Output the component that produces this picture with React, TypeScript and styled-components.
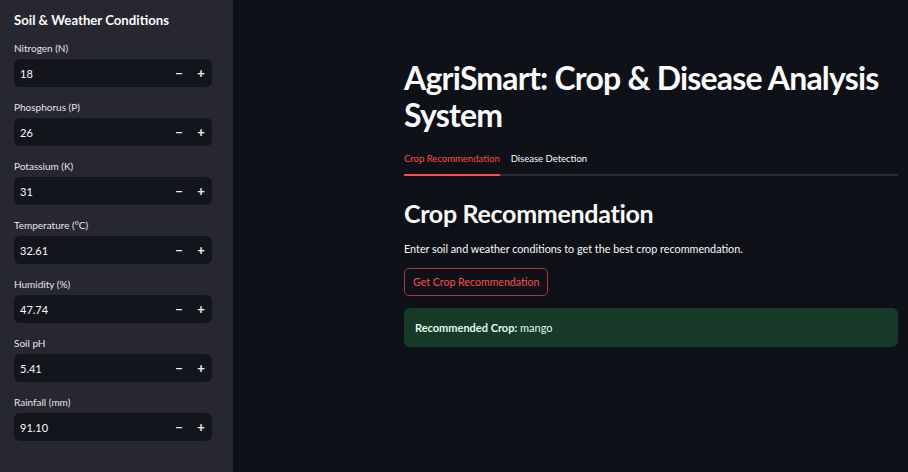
import React from "react";
import styled, { createGlobalStyle } from "styled-components";

const GlobalStyle = createGlobalStyle`
  html, body {
    margin: 0;
    padding: 0;
    background: #0e1117;
  }
  body {
    font-family: Lato, "Noto Sans", sans-serif;
    color: #fafafa;
  }
`;

const Page = styled.div`
  display: flex;
  width: 908px;
  height: 472px;
  overflow: hidden;
  background: #0e1117;
`;

const Sidebar = styled.aside`
  width: 233px;
  flex-shrink: 0;
  background: #262730;
  padding: 11px 21px 0 14px;
  box-sizing: border-box;
  display: flex;
  flex-direction: column;
`;

const SideTitle = styled.h2`
  margin: 0 0 12px;
  font-size: 13.2px;
  line-height: 18px;
  font-weight: 700;
  color: #fafafa;
`;

const Field = styled.div`
  display: flex;
  flex-direction: column;
  margin-bottom: 13px;
`;

const Label = styled.label`
  font-size: 10px;
  line-height: 14px;
  color: #e6e6ea;
  margin-bottom: 4px;
`;

const NumberBox = styled.div`
  height: 28px;
  background: #13151c;
  border-radius: 6px;
  display: flex;
  align-items: center;
  padding: 0 0 0 6px;
  font-size: 11px;
  color: #fafafa;
`;

const Value = styled.span`
  flex: 1;
`;

const Step = styled.button`
  width: 22px;
  height: 28px;
  background: transparent;
  border: none;
  color: #fafafa;
  font-family: inherit;
  font-size: 13px;
  font-weight: 700;
  padding: 0;
  display: flex;
  align-items: center;
  justify-content: center;
`;

const Main = styled.main`
  flex: 1;
  padding: 59px 10px 0 171px;
  display: flex;
  flex-direction: column;
`;

const Title = styled.h1`
  margin: 0;
  font-size: 32px;
  line-height: 37px;
  font-weight: 700;
  letter-spacing: -0.8px;
  color: #fafafa;
`;

const TabList = styled.div`
  margin-top: 17px;
  display: flex;
  gap: 11px;
  border-bottom: 2px solid #2b2d36;
`;

const Tab = styled.div<{ active?: boolean }>`
  font-size: 9.5px;
  line-height: 14px;
  padding: 2px 0 8px;
  color: ${({ active }) => (active ? "#ff4b4b" : "#fafafa")};
  border-bottom: 2px solid ${({ active }) => (active ? "#ff4b4b" : "transparent")};
  margin-bottom: -2px;
`;

const Heading = styled.h2`
  margin: 22px 0 0;
  font-size: 25px;
  line-height: 30px;
  font-weight: 700;
  letter-spacing: -0.3px;
  color: #fafafa;
`;

const Text = styled.p`
  margin: 13px 0 0;
  font-size: 10.8px;
  line-height: 16px;
  color: #fafafa;
`;

const Button = styled.button`
  margin-top: 11px;
  align-self: flex-start;
  height: 28px;
  padding: 0 8px;
  background: transparent;
  border: 1px solid #a8393e;
  border-radius: 5px;
  color: #ff4b4b;
  font-family: inherit;
  font-size: 10.6px;
`;

const Success = styled.div`
  margin-top: 12px;
  height: 39px;
  background: #173a29;
  border-radius: 6px;
  display: flex;
  align-items: center;
  padding: 0 11px;
  font-size: 11px;
  color: #dffde9;
`;

const fields = [
  ["Nitrogen (N)", "18"],
  ["Phosphorus (P)", "26"],
  ["Potassium (K)", "31"],
  ["Temperature (°C)", "32.61"],
  ["Humidity (%)", "47.74"],
  ["Soil pH", "5.41"],
  ["Rainfall (mm)", "91.10"],
];

export default function App() {
  return (
    <Page>
      <GlobalStyle />
      <Sidebar>
        <SideTitle>Soil &amp; Weather Conditions</SideTitle>
        {fields.map(([label, value]) => (
          <Field key={label}>
            <Label>{label}</Label>
            <NumberBox>
              <Value>{value}</Value>
              <Step>−</Step>
              <Step>+</Step>
            </NumberBox>
          </Field>
        ))}
      </Sidebar>
      <Main>
        <Title>AgriSmart: Crop &amp; Disease Analysis System</Title>
        <TabList>
          <Tab active>Crop Recommendation</Tab>
          <Tab>Disease Detection</Tab>
        </TabList>
        <Heading>Crop Recommendation</Heading>
        <Text>Enter soil and weather conditions to get the best crop recommendation.</Text>
        <Button>Get Crop Recommendation</Button>
        <Success>
          <b>Recommended Crop:</b>&nbsp;mango
        </Success>
      </Main>
    </Page>
  );
}
